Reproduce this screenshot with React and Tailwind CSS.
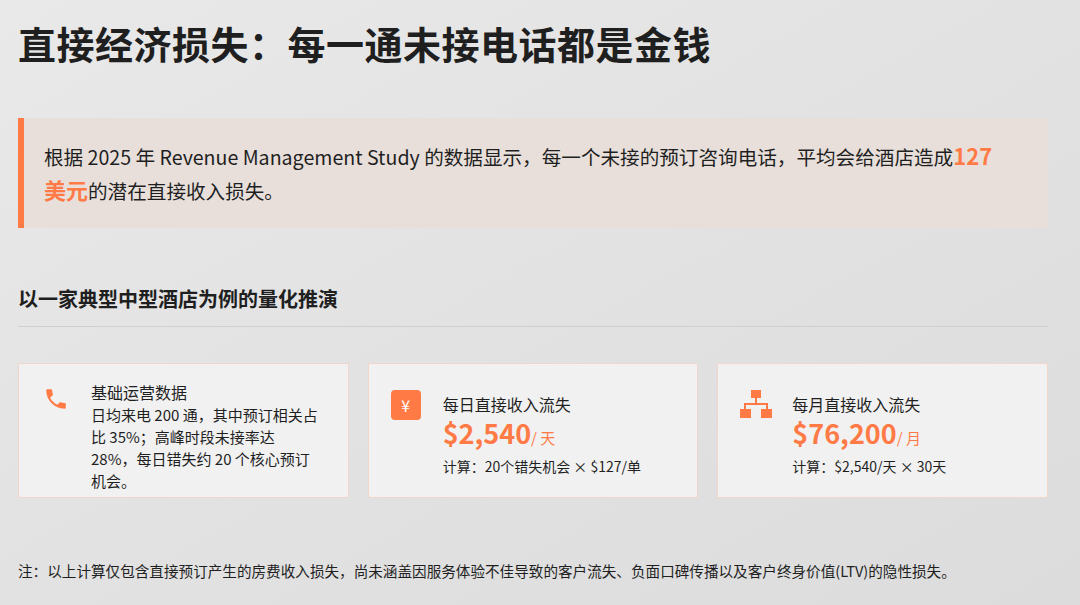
export default function App() {
  const font = { fontFamily: '"Noto Sans CJK SC", "Noto Sans", sans-serif' }
  return (
    <div style={font} className="w-[1080px] h-[605px] overflow-hidden bg-gradient-to-br from-[#e9e9e9] via-[#e2e2e2] to-[#dcdcdc] px-[18px] pt-[18px] text-[#1f1f1f]">
      <h1 className="text-[38px] font-bold leading-[50px] tracking-[0.5px]">直接经济损失：每一通未接电话都是金钱</h1>

      {/* Callout */}
      <div className="mt-[50px] w-[1030px] h-[110px] flex items-center border-l-[6px] border-[#ff7a45] bg-[#e8dfdb] pl-[20px] pr-[30px]">
        <p className="text-[19.6px] leading-[32px]">
          根据 2025 年 Revenue Management Study 的数据显示，每一个未接的预订咨询电话，平均会给酒店造成<span className="text-[#ff7a45] font-bold text-[22px]">127<br />美元</span>的潜在直接收入损失。
        </p>
      </div>

      <h2 className="mt-[56px] text-[20px] font-bold leading-[30px]">以一家典型中型酒店为例的量化推演</h2>
      <div className="mt-[12px] w-[1030px] h-px bg-[#cfcfcf]" />

      {/* Cards */}
      <div className="mt-[36px] w-[1030px] grid grid-cols-3 gap-[19px]">
        <div className="h-[135px] bg-[#f1f1f1] border border-[#f0d6cb] flex pt-[16px] pl-[24px]">
          <svg width="26" height="26" viewBox="0 0 24 24" className="mt-[6px] shrink-0" fill="#ff7a45">
            <path d="M6.6 10.8c1.4 2.8 3.8 5.1 6.6 6.6l2.2-2.2c.3-.3.7-.4 1-.2 1.1.4 2.3.6 3.6.6.6 0 1 .4 1 1V20c0 .6-.4 1-1 1C10.6 21 3 13.4 3 4c0-.6.4-1 1-1h3.5c.6 0 1 .4 1 1 0 1.3.2 2.5.6 3.6.1.3 0 .7-.2 1L6.6 10.8z" />
          </svg>
          <div className="ml-[22px] text-[15px] leading-[22px]">
            <div className="text-[16px] leading-[24px]">基础运营数据</div>
            <div className="w-[228px]">日均来电 200 通，其中预订相关占比 35%；高峰时段未接率达 28%，每日错失约 20 个核心预订机会。</div>
          </div>
        </div>

        <div className="h-[135px] bg-[#f1f1f1] border border-[#f0d6cb] flex pt-[26px] pl-[22px]">
          <div className="w-[30px] h-[30px] rounded-[4px] bg-[#ff7a45] text-white flex items-center justify-center text-[16px] shrink-0">¥</div>
          <div className="ml-[22px]">
            <div className="text-[16px] leading-[24px] mt-[2px]">每日直接收入流失</div>
            <div className="text-[#ff7a45] leading-[34px]"><span className="text-[27px] font-bold">$2,540</span><span className="text-[15px]">/ 天</span></div>
            <div className="text-[14px] leading-[22px]">计算：20个错失机会 × $127/单</div>
          </div>
        </div>

        <div className="h-[135px] bg-[#f1f1f1] border border-[#f0d6cb] flex pt-[26px] pl-[22px]">
          <svg width="32" height="32" viewBox="0 0 32 32" fill="#ff7a45" className="shrink-0">
            <rect x="11" y="0" width="10" height="8" />
            <rect x="15" y="8" width="2" height="6" />
            <rect x="4" y="13" width="24" height="2" />
            <rect x="4" y="13" width="2" height="6" />
            <rect x="26" y="13" width="2" height="6" />
            <rect x="0" y="19" width="11" height="9" />
            <rect x="21" y="19" width="11" height="9" />
          </svg>
          <div className="ml-[20px]">
            <div className="text-[16px] leading-[24px] mt-[2px]">每月直接收入流失</div>
            <div className="text-[#ff7a45] leading-[34px]"><span className="text-[27px] font-bold">$76,200</span><span className="text-[15px]">/ 月</span></div>
            <div className="text-[14px] leading-[22px]">计算：$2,540/天 × 30天</div>
          </div>
        </div>
      </div>

      <p className="mt-[62px] text-[14.6px] leading-[22px]">注：以上计算仅包含直接预订产生的房费收入损失，尚未涵盖因服务体验不佳导致的客户流失、负面口碑传播以及客户终身价值(LTV)的隐性损失。</p>
    </div>
  )
}
